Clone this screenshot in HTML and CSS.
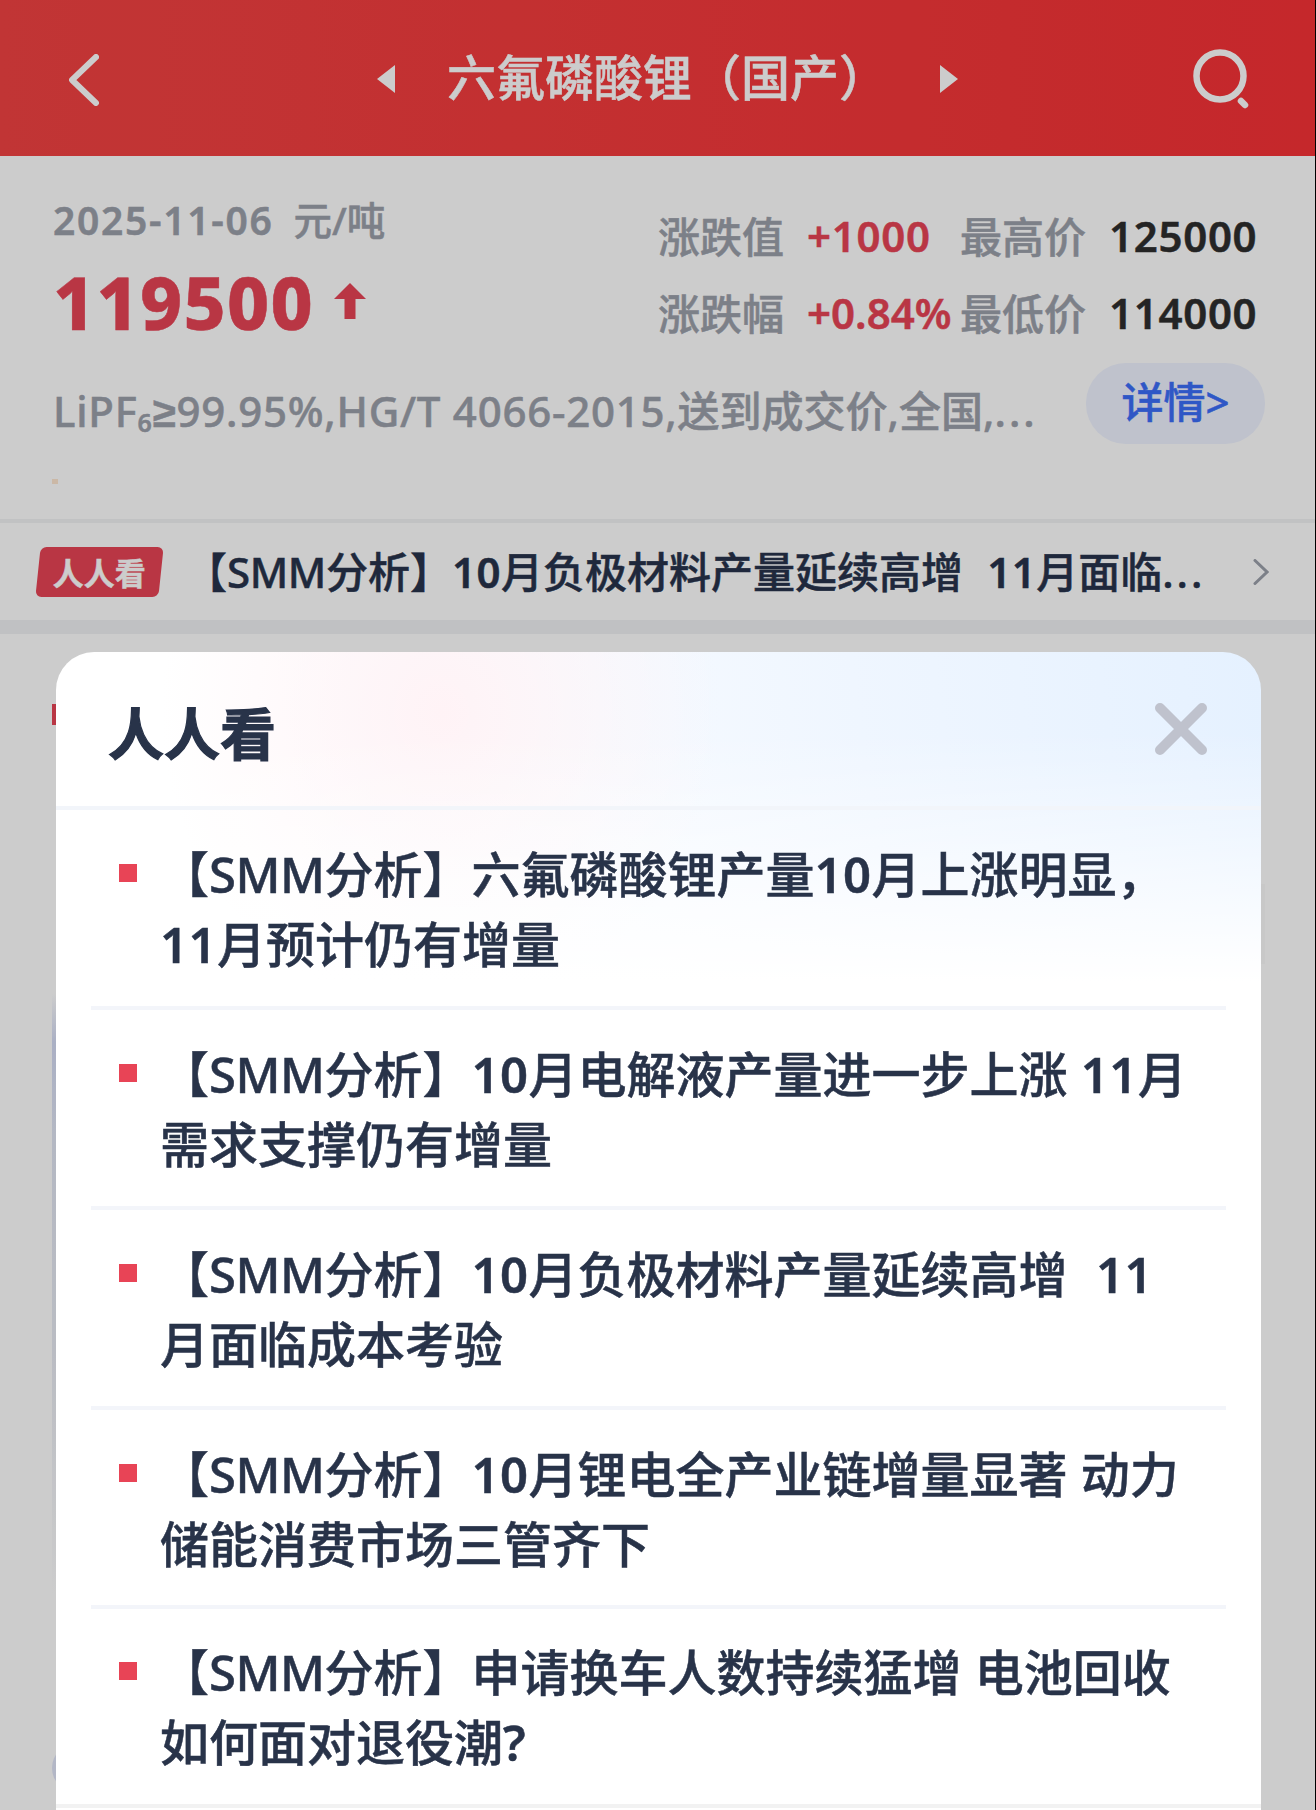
FILE: index.html
```html
<!DOCTYPE html>
<html lang="zh-CN">
<head>
    <meta charset="UTF-8">
    <meta name="viewport" content="width=device-width, initial-scale=1.0">
    <title>六氟磷酸锂（国产）</title>
    <link rel="stylesheet" href="styles.css">
</head>
<body>

<header>
    <svg class="back-icon" viewBox="0 0 30 52"><path d="M27 3 L3 26 L27 49"/></svg>
    <div class="switcher">
        <svg class="arrow" viewBox="0 0 18 28"><path d="M18 0 L0 14 L18 28 Z"/></svg>
        <h1>六氟磷酸锂（国产）</h1>
        <svg class="arrow" viewBox="0 0 18 28"><path d="M0 0 L18 14 L0 28 Z"/></svg>
    </div>
    <svg class="search-icon" viewBox="0 0 58 62">
        <circle cx="27" cy="27" r="23.5"/>
        <path d="M48 52 L52 56"/>
    </svg>
</header>

<section class="quote">
    <div class="quote-top">
        <div class="quote-left">
            <p class="date"><span class="day">2025-11-06</span><span>元/吨</span></p>
            <p class="price">119500
                <svg class="up-icon" viewBox="0 0 32 36"><path d="M16 0 L32 16 H21.500 V36 H10.500 V16 H0 Z"/></svg>
            </p>
        </div>
        <div class="figures">
            <span>涨跌值</span><b class="up">+1000</b><span>最高价</span><b>125000</b>
            <span>涨跌幅</span><b class="up rate">+0.84%</b><span>最低价</span><b>114000</b>
        </div>
    </div>
    <div class="spec">
        <p><span class="spec-code">LiPF<sub>6</sub><span class="ge">≥</span>99.95%,HG/T 4066-2015,</span>送到成交价,全国,<span class="dots">...</span></p>
        <a href="#" class="detail">详情&gt;</a>
    </div>
    <i class="dot"></i>
</section>

<section class="news">
    <span class="badge"><em>人人看</em></span>
    <p>【<span class="smm">SMM</span>分析】<span class="num">10</span>月负极材料产量延续高增<span class="num gap">11</span>月面临<span class="dots">...</span></p>
    <svg class="more-icon" viewBox="0 0 16 26"><path d="M2 1.500 L14 13 L2 24.500"/></svg>
</section>

<!-- 图表区域 -->
<section class="charts">
    <i class="mark"></i>
    <i class="band"></i>
    <i class="bubble"></i>
    <i class="edge"></i>
</section>

<div class="overlay"></div>

<!-- 弹窗 -->
<div class="modal">
    <div class="modal-head">
        <h2>人人看</h2>
        <svg class="close" viewBox="0 0 54 54"><path d="M6 6 L48 48 M48 6 L6 48"/></svg>
    </div>
    <ul>
        <li><p>【<span class="smm">SMM</span>分析】六氟磷酸锂产量<span class="num">10</span>月上涨明显，<br><span class="num">11</span>月预计仍有增量</p></li>
        <li><p>【<span class="smm">SMM</span>分析】<span class="num">10</span>月电解液产量进一步上涨<span class="num space">11</span>月<br>需求支撑仍有增量</p></li>
        <li><p>【<span class="smm">SMM</span>分析】<span class="num">10</span>月负极材料产量延续高增<span class="num gap">11</span><br>月面临成本考验</p></li>
        <li><p>【<span class="smm">SMM</span>分析】<span class="num">10</span>月锂电全产业链增量显著<span class="space">动</span>力<br>储能消费市场三管齐下</p></li>
        <li><p>【<span class="smm">SMM</span>分析】申请换车人数持续猛增<span class="space">电</span>池回收<br>如何面对退役潮<span class="num">?</span></p></li>
    </ul>
</div>

</body>
</html>
```
FILE: styles.css
```css
* {
    box-sizing: border-box;
}

body {
    font-family: "Noto Sans", "Noto Sans CJK SC", sans-serif;
    font-weight: 500;
    margin: 0;
    height: 1810px;
    overflow: hidden;
    position: relative;
    background-color: white;
    border-right: 1px solid #000;
    -webkit-text-stroke: 0.5px currentColor;
}

h1, h2, p, ul {
    margin: 0;
    padding: 0;
}

p, h1, h2, span {
    white-space: nowrap;
}

svg {
    display: block;
    fill: none;
    flex: none;
}

header {
    height: 156px;
    padding: 0 64px 0 69px;
    display: flex;
    justify-content: space-between;
    align-items: center;
    background: linear-gradient(90deg, #f24343, #f73236);
    color: white;
}

.back-icon {
    width: 30px;
    height: 52px;
    stroke: white;
    stroke-width: 6;
    stroke-linecap: round;
    stroke-linejoin: round;
    margin-top: 3px;
}

.switcher {
    display: flex;
    align-items: center;
    margin-left: 43px;
}

.switcher h1 {
    font-size: 49px;
    font-weight: 500;
    line-height: 70px;
    margin: -2px 52px 0 52px;
}

.arrow {
    width: 18px;
    height: 28px;
    fill: white;
    margin-top: 2px;
}

.search-icon {
    width: 58px;
    height: 62px;
    stroke: white;
    stroke-width: 6.500;
    stroke-linecap: round;
    margin-top: 4px;
}

/* 报价 */
.quote {
    height: 367px;
    padding: 0 50px 0 53px;
    border-bottom: 4px solid #f2f3f4;
    color: #9ca0ab;
}

.quote-top {
    display: flex;
    justify-content: space-between;
    height: 200px;
}

.date {
    font-size: 38.500px;
    line-height: 50px;
    margin-top: 39px;
    display: flex;
    gap: 20px;
}

.date .day {
    font-size: 39px;
    font-weight: 600;
    letter-spacing: 1.700px;
}

.price {
    display: flex;
    align-items: center;
    gap: 20px;
    font-size: 73px;
    font-weight: 800;
    line-height: 90px;
    letter-spacing: 1.300px;
    margin-top: 12px;
    color: #e84456;
}

.up-icon {
    width: 32px;
    height: 36px;
    fill: #e84456;
    margin-top: -3px;
}

.figures {
    display: grid;
    grid-template-columns: 149px 153px 149px 156px;
    grid-auto-rows: 77px;
    align-items: center;
    font-size: 42px;
    margin-top: 40px;
}

.figures b {
    font-weight: 600;
    letter-spacing: 0.700px;
    padding-top: 2px;
    color: #2e2e2e;
}

.figures .up {
    color: #e84456;
}

.figures .rate {
    letter-spacing: 0;
}

.spec {
    display: flex;
    justify-content: space-between;
    align-items: flex-start;
    font-size: 42px;
    padding-top: 7px;
}

.spec p {
    line-height: 60px;
    margin-top: 18px;
}

.spec-code {
    letter-spacing: 0.750px;
}

.spec sub {
    font-size: 25px;
    font-weight: 600;
    line-height: 0;
    vertical-align: -5px;
}

.ge {
    font-family: "Liberation Sans", sans-serif;
    font-weight: 600;
}

.dots {
    letter-spacing: 3px;
}

.detail {
    width: 179px;
    height: 81px;
    border-radius: 40px;
    background-color: #eff3ff;
    color: #3b6df8;
    text-decoration: none;
    text-align: center;
    line-height: 77px;
}

.dot {
    display: block;
    width: 6px;
    height: 5px;
    margin: 35px 0 0 -1px;
    background-color: #fee6d0;
}

/* 快讯 */
.news {
    height: 111px;
    padding: 0 46px 0 38px;
    display: flex;
    align-items: center;
    border-bottom: 14px solid #f0f2f4;
    font-size: 42px;
    color: #27334b;
}

.badge {
    width: 123px;
    height: 50px;
    border-radius: 6px;
    background-color: #e84456;
    color: white;
    font-size: 31px;
    font-weight: 700;
    line-height: 53px;
    text-align: center;
    transform: skewX(-6deg);
}

.badge em {
    display: block;
    font-style: normal;
    transform: skewX(6deg);
}

.news p {
    line-height: 60px;
    margin-left: 24px;
}

.more-icon {
    width: 16px;
    height: 26px;
    margin-left: auto;
    stroke: #9ca0ab;
    stroke-width: 3;
    stroke-linecap: round;
}

.smm {
    letter-spacing: -0.010em;
}

.num {
    font-weight: 600;
    letter-spacing: 0.010em;
}

.gap {
    margin-left: 0.580em;
}

.space {
    margin-left: 0.270em;
}

.charts {
    position: relative;
    height: 1176px;
}

.charts i {
    position: absolute;
    left: 52px;
    width: 6px;
}

.charts .mark {
    top: 70px;
    height: 21px;
    background-color: #e84456;
}

.charts .band {
    top: 360px;
    height: 600px;
    background: linear-gradient(transparent, #d5dcf6 8%, #e2e7f4 25%, #e9ecf4 60%, transparent);
}

.charts .bubble {
    top: 1110px;
    width: 48px;
    height: 48px;
    border-radius: 50%;
    background-color: #e0e5f8;
}

.charts .edge {
    left: 1259px;
    top: 250px;
    height: 80px;
    background-color: #fafafa;
}

.overlay {
    position: absolute;
    top: 0;
    left: 0;
    width: 100%;
    height: 100%;
    background-color: rgba(0, 0, 0, 0.2);
}

/* 弹窗 */
.modal {
    position: absolute;
    top: 652px;
    left: 56px;
    width: 1205px;
    height: 1200px;
    border-radius: 38px 38px 0 0;
    color: #283349;
    background:
        linear-gradient(to bottom, rgba(255, 255, 255, 0) 80px, white 330px),
        radial-gradient(ellipse 280px 300px at 385px 60px, #fff3f6, rgba(255, 243, 246, 0)),
        linear-gradient(82deg, white 28%, #eff6ff 70%, #e5f1ff);
    background-color: white;
}

.modal-head {
    height: 158px;
    padding: 0 53px;
    display: flex;
    justify-content: space-between;
    align-items: center;
    border-bottom: 4px solid #f2f5fa;
}

.modal-head h2 {
    font-size: 56px;
    font-weight: 700;
    line-height: 80px;
    margin: 7px 0 0 -1px;
    -webkit-text-stroke: 1.200px currentColor;
}

.close {
    width: 54px;
    height: 54px;
    stroke: #bfc2cd;
    stroke-width: 10;
    stroke-linecap: round;
}

.modal ul {
    list-style: none;
    border-bottom: 4px solid #f2f2f2;
}

.modal li {
    display: flex;
    height: 200px;
    margin: 0 35px;
    padding: 29px 0 0 28px;
    border-bottom: 4px solid #f3f5fa;
    font-size: 49px;
    line-height: 70px;
}

.modal li:nth-child(n+3) {
    height: 199.500px;
}

.modal li:last-child {
    height: 195px;
    padding-top: 28px;
    border-bottom: none;
}

.modal li p {
    margin-left: -1px;
}

.modal li::before {
    content: "";
    width: 18px;
    height: 18px;
    margin: 25px 24px 0 0;
    background-color: #e84456;
}
```
